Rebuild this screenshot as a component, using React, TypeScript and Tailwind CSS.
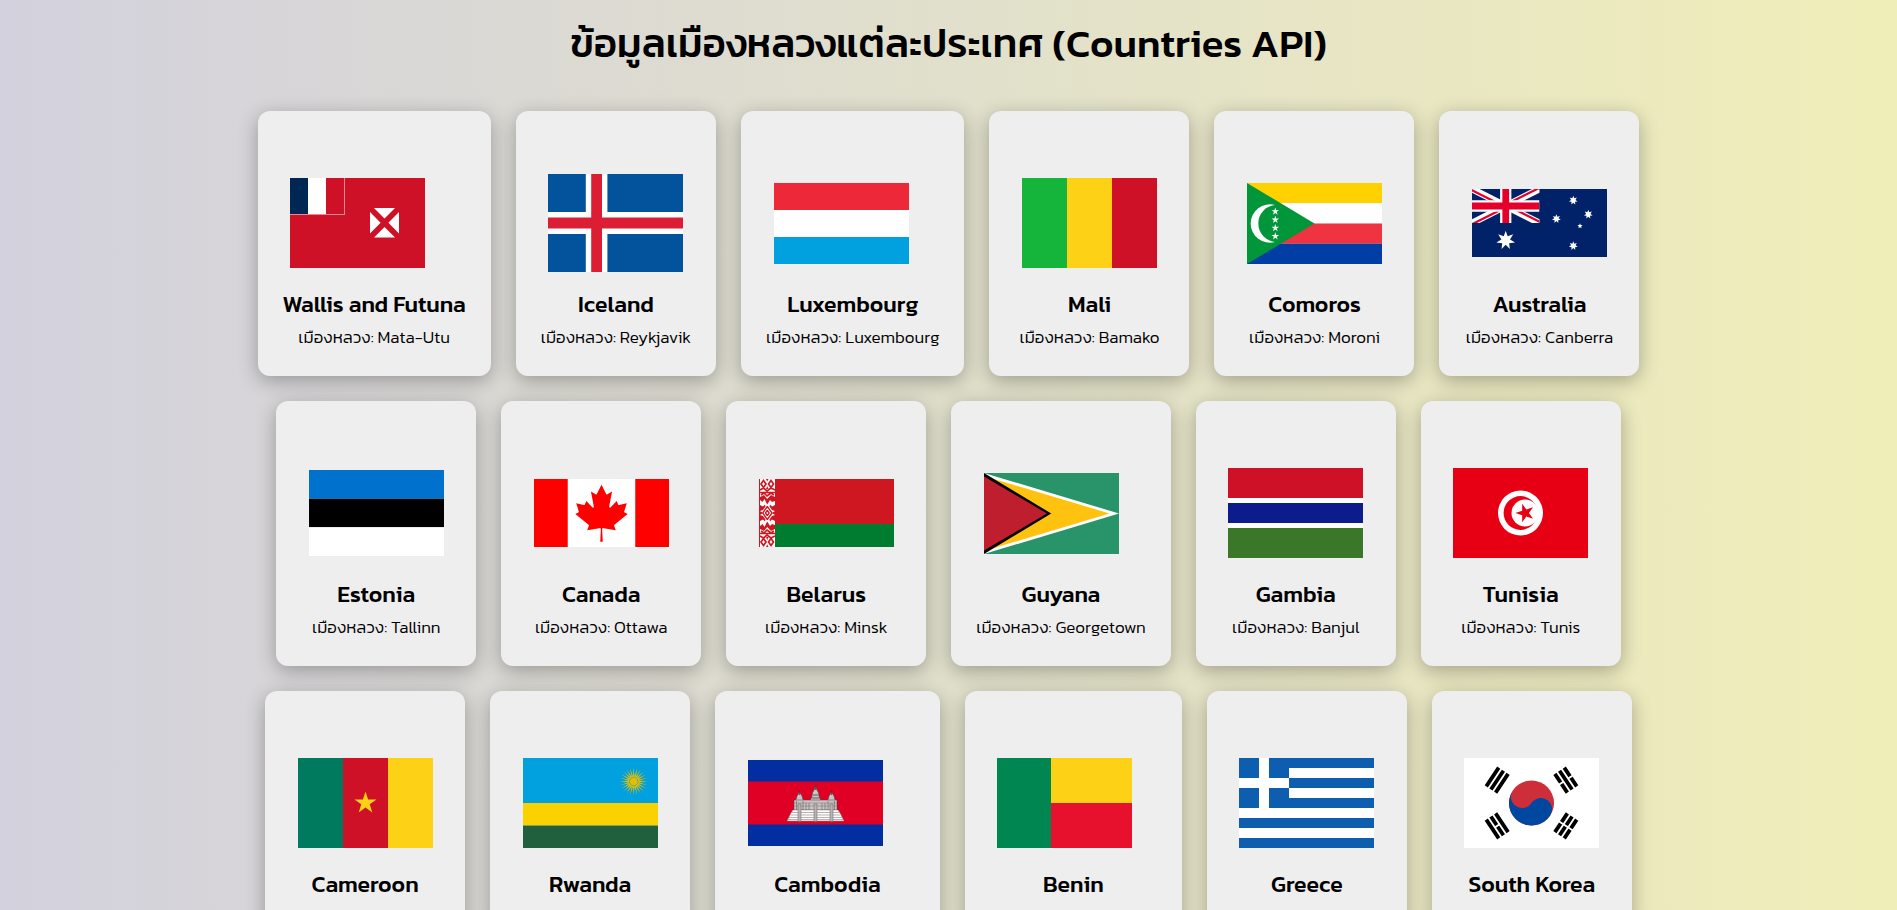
import type { ReactNode } from "react";

type Country = { name: string; capital: string; flag: ReactNode };

function starPoints(cx: number, cy: number, r: number, inner: number, n: number, turn = -90) {
  return Array.from({ length: n * 2 }, (_, i) => {
    const a = ((turn + (i * 180) / n) * Math.PI) / 180;
    const d = i % 2 === 0 ? r : inner;
    return `${(cx + d * Math.cos(a)).toFixed(2)},${(cy + d * Math.sin(a)).toFixed(2)}`;
  }).join(" ");
}

function Star({ x, y, r, n = 5, ratio = 0.382, turn = -90, fill = "#fff" }: {
  x: number; y: number; r: number; n?: number; ratio?: number; turn?: number; fill?: string;
}) {
  return <polygon points={starPoints(x, y, r, r * ratio, n, turn)} fill={fill} />;
}

function Flag({ box, height, children }: { box: string; height: number; children: ReactNode }) {
  return (
    <svg viewBox={box} width={135} height={height} preserveAspectRatio="none" className="block shrink-0 overflow-hidden" aria-hidden="true">
      {children}
    </svg>
  );
}

const wallis = (
  <Flag box="0 0 135 90" height={90}>
    <path fill="#ce1126" d="M0 0h135v90H0z" />
    <path fill="#fff" fillOpacity=".5" d="M54 0h1v37H0v-1h54z" />
    <path fill="#002654" d="M0 0h18v36H0z" />
    <path fill="#fff" d="M18 0h18v36H18z" />
    <path fill="#fff" d="M84 30h21L94.500 40.500zM84 59.600h21L94.500 49.100zM80 34v21.500L90.600 44.800zM109 34v21.500L98.400 44.800z" />
  </Flag>
);

const iceland = (
  <Flag box="0 0 25 18" height={98}>
    <path fill="#02529c" d="M0 0h25v18H0z" />
    <path fill="#fff" d="M0 7h7V0h4v7h14v4H11v7H7v-7H0z" />
    <path fill="#dc1e35" d="M0 8h8V0h2v8h15v2H10v8H8v-8H0z" />
  </Flag>
);

const luxembourg = (
  <Flag box="0 0 135 81" height={81}>
    <path fill="#ed2939" d="M0 0h135v27H0z" />
    <path fill="#fff" d="M0 27h135v27H0z" />
    <path fill="#00a1de" d="M0 54h135v27H0z" />
  </Flag>
);

const mali = (
  <Flag box="0 0 3 2" height={90}>
    <path fill="#14b53a" d="M0 0h1v2H0z" />
    <path fill="#fcd116" d="M1 0h1v2H1z" />
    <path fill="#ce1126" d="M2 0h1v2H2z" />
  </Flag>
);

const comoros = (
  <Flag box="0 0 135 81" height={81}>
    <path fill="#ffd100" d="M0 0h135v20.250H0z" />
    <path fill="#fff" d="M0 20.250h135v20.250H0z" />
    <path fill="#ef3340" d="M0 40.500h135v20.250H0z" />
    <path fill="#003da5" d="M0 60.750h135V81H0z" />
    <path fill="#009639" d="M0 0l67.500 40.500L0 81z" />
    <path fill="#fff" d="M28 22A19.200 19.200 0 1 0 28 59A18.600 18.600 0 0 1 28 22z" />
    {[28.4, 36.7, 45, 53.3].map((y) => <Star key={y} x={28.3} y={y} r={4} />)}
  </Flag>
);

const australia = (
  <Flag box="0 0 135 67.5" height={68}>
    <path fill="#012169" d="M0 0h135v68H0z" />
    <svg x="0" y="0" width="67.5" height="33.75" viewBox="0 0 60 30">
      <path stroke="#fff" strokeWidth="6" d="M0 0l60 30M60 0L0 30" />
      <path fill="#e4002b" d="M0 0l30 15h-4.500L0 2.200zM60 30L30 15h4.500L60 27.800zM60 0L34 13h-4.500L55.600 0zM0 30l26-13h4.500L4.400 30z" />
      <path stroke="#fff" strokeWidth="10" d="M30 0v30M0 15h60" />
      <path stroke="#e4002b" strokeWidth="6" d="M30 0v30M0 15h60" />
    </svg>
    <Star x={33.7} y={51} r={9.6} n={7} ratio={0.46} />
    <Star x={101.3} y={11.3} r={4.5} n={7} ratio={0.5} />
    <Star x={84.4} y={29.6} r={4.5} n={7} ratio={0.5} />
    <Star x={116.3} y={25.2} r={4.5} n={7} ratio={0.5} />
    <Star x={101.3} y={56.4} r={4.5} n={7} ratio={0.5} />
    <Star x={108} y={36.8} r={2.7} ratio={0.45} />
  </Flag>
);

const estonia = (
  <Flag box="0 0 3 3" height={86}>
    <path fill="#0072ce" d="M0 0h3v1H0z" />
    <path fill="#000" d="M0 1h3v1H0z" />
    <path fill="#fff" d="M0 2h3v1H0z" />
  </Flag>
);

const canada = (
  <Flag box="0 0 9600 4800" height={68}>
    <path fill="#f00" d="M0 0h9600v4800H0z" />
    <path fill="#fff" d="M2400 0h4800v4800H2400z" />
    <path fill="#f00" d="m4890 4430-45-863a95 95 0 0 1 111-98l859 151-116-320a65 65 0 0 1 20-73l941-762-212-99a65 65 0 0 1-34-79l186-572-542 115a65 65 0 0 1-73-38l-105-247-423 454a65 65 0 0 1-111-57l204-1052-327 189a65 65 0 0 1-91-27l-332-652-332 652a65 65 0 0 1-91 27l-327-189 204 1052a65 65 0 0 1-111 57l-423-454-105 247a65 65 0 0 1-73 38l-542-115 186 572a65 65 0 0 1-34 79l-212 99 941 762a65 65 0 0 1 20 73l-116 320 859-151a95 95 0 0 1 111 98l-45 863z" />
  </Flag>
);

const belarus = (
  <Flag box="0 0 135 68" height={68}>
    <path fill="#ce1720" d="M0 0h135v45H0z" />
    <path fill="#007c30" d="M16 45h119v23H16z" />
    <path fill="#fff" d="M0 0h16v68H0z" />
    <path fill="#ce1720" d="M0 0h1v68H0z" />
    {[false, true].map((flip) => (
      <g key={String(flip)} transform={flip ? "matrix(1 0 0 -1 0 68)" : undefined}>
        <path fill="none" stroke="#ce1720" strokeWidth="1.700" d="M4.500 1.500L7 5 4.500 8.500 2 5zM12 1.500L14.500 5 12 8.500 9.500 5zM1 11l3.500-2L8 12l4-3 4 2M1 13.500h15M2 16l3-2 3 3 4-3 3 2" />
        <path fill="#ce1720" d="M7 0h2.500L8.200 2.500zM7 10h2.500L8.200 7zM1 18l4-2 3.200 4 3.800-4 4 2v4l-3 1-2-2-2.800 4.500L5.500 20 3.500 23 1 21zM1 26l3 1.500 2-2 .5 2L4 31l-3 1zM16 26l-3 1.500-2-2-.5 2L13 31l3 1zM1 33l3 1-3 2zM16 33l-3 1 3 2z" />
        <path fill="none" stroke="#ce1720" strokeWidth="1.300" d="M8.300 27.500L13 34M8.300 27.500L3.700 34M8.300 31.500L10.300 34M8.300 31.500L6.300 34" />
      </g>
    ))}
  </Flag>
);

const guyana = (
  <Flag box="0 0 500 300" height={81}>
    <path fill="#29936a" d="M0 0h500v300H0z" />
    <path fill="#fff" d="M0 0l500 150L0 300z" />
    <path fill="#ffc20e" d="M0 11l465 139L0 289z" />
    <path fill="#000" d="M0 0l249 150L0 300z" />
    <path fill="#be1e2d" d="M0 13l233 137L0 287z" />
  </Flag>
);

const gambia = (
  <Flag box="0 0 3 18" height={90}>
    <path fill="#fff" d="M0 0h3v18H0z" />
    <path fill="#ce1126" d="M0 0h3v6H0z" />
    <path fill="#0c1c8c" d="M0 7h3v4H0z" />
    <path fill="#3a7728" d="M0 12h3v6H0z" />
  </Flag>
);

const tunisia = (
  <Flag box="0 0 135 90" height={90}>
    <path fill="#e70013" d="M0 0h135v90H0z" />
    <circle cx="67.5" cy="45" r="22.5" fill="#fff" />
    <circle cx="67.5" cy="45" r="16.9" fill="#e70013" />
    <circle cx="72" cy="45" r="13.5" fill="#fff" />
    <Star x={72.2} y={45} r={9.8} turn={180} fill="#e70013" />
  </Flag>
);

const cameroon = (
  <Flag box="0 0 135 90" height={90}>
    <path fill="#007a5e" d="M0 0h45v90H0z" />
    <path fill="#ce1126" d="M45 0h45v90H45z" />
    <path fill="#fcd116" d="M90 0h45v90H90z" />
    <Star x={67.5} y={45} r={11.6} fill="#fcd116" />
  </Flag>
);

const rwanda = (
  <Flag box="0 0 135 90" height={90}>
    <path fill="#00a1de" d="M0 0h135v45H0z" />
    <path fill="#fad201" d="M0 45h135v22.500H0z" />
    <path fill="#20603d" d="M0 67.500h135V90H0z" />
    <Star x={110.7} y={23.5} r={14} n={24} ratio={0.38} fill="#e5be01" />
    <circle cx="110.7" cy="23.500" r="4.300" fill="#e5be01" stroke="#00a1de" strokeWidth=".6" />
  </Flag>
);

const tower = "M0-9l1 3 1.500 2 .7 3 1.600 2 .2 3H-5l.2-3 1.600-2 .7-3L-1-6z";

const cambodia = (
  <Flag box="0 0 135 86" height={86}>
    <path fill="#032ea1" d="M0 0h135v86H0z" />
    <path fill="#e00025" d="M0 21.500h135v43H0z" />
    <g fill="#c9c5c5" stroke="#4a3c3e" strokeWidth=".5">
      <path d={tower} transform="translate(51.5 40)" />
      <path d={tower} transform="translate(83.5 40)" />
      <path d={tower} transform="matrix(1.2 0 0 1.600 67.500 39)" />
      <path d="M46 40h43v10H46z" />
    </g>
    <path fill="#fff" stroke="#8a7c7e" strokeWidth=".5" d="M45 50h45l2 3 1 2 1 2 1 2 1 2H39l1-2 1-2 1-2 1-2z" />
    <path fill="none" stroke="#8a7c7e" strokeWidth=".6" d="M44 52.500h47M43 55h49M41 57.500h53M40 59.500h55M46 43h43M46 46h43" />
    <path fill="none" stroke="#5c4f51" strokeWidth=".5" d="M48.500 41v9M55 41v9M58 43v7M61 43v7M74 43v7M77 43v7M80 41v9M86.500 41v9" />
    <path fill="#b9b4b4" stroke="#6b5e60" strokeWidth=".5" d="M50 44h3v17.500h-3zM66 44h3v17.500h-3zM82 44h3v17.500h-3z" />
    <path fill="none" stroke="#3a2d2f" strokeWidth=".7" d="M51.500 31v4M83.500 31v4M67.500 25v5M65 35h5M64 38h7" />
  </Flag>
);

const benin = (
  <Flag box="0 0 135 90" height={90}>
    <path fill="#008751" d="M0 0h54v90H0z" />
    <path fill="#fcd116" d="M54 0h81v45H54z" />
    <path fill="#e8112d" d="M54 45h81v45H54z" />
  </Flag>
);

const greece = (
  <Flag box="0 0 27 18" height={90}>
    <path fill="#0d5eaf" d="M0 0h27v18H0z" />
    <path fill="#fff" d="M10 2h17v2H10zM10 6h17v2H10zM0 10h27v2H0zM0 14h27v2H0zM4 0h2v10H4zM0 4h10v2H0z" />
  </Flag>
);

const bars = "M-6-25H6M-6-22H6M-6-19H6M-6 19H6M-6 22H6M-6 25H6";

const korea = (
  <Flag box="-36 -24 72 48" height={90}>
    <path fill="#fff" d="M-36-24h72v48h-72z" />
    <g transform="rotate(-56.31)">
      <path stroke="#000" strokeWidth="2" d={bars} />
      <circle r="12" fill="#cd2e3a" />
      <path fill="#0047a0" d="M0-12A6 6 0 0 0 0 0A6 6 0 0 1 0 12A12 12 0 0 1 0-12z" />
      <path stroke="#fff" d="M0 17v10" />
    </g>
    <g transform="rotate(-123.69)">
      <path stroke="#000" strokeWidth="2" d={bars} />
      <path stroke="#fff" d="M0-23.500v3M0 17v3.500M0 23.500v3" />
    </g>
  </Flag>
);

const countries: Country[] = [
  { name: "Wallis and Futuna", capital: "Mata-Utu", flag: wallis },
  { name: "Iceland", capital: "Reykjavik", flag: iceland },
  { name: "Luxembourg", capital: "Luxembourg", flag: luxembourg },
  { name: "Mali", capital: "Bamako", flag: mali },
  { name: "Comoros", capital: "Moroni", flag: comoros },
  { name: "Australia", capital: "Canberra", flag: australia },
  { name: "Estonia", capital: "Tallinn", flag: estonia },
  { name: "Canada", capital: "Ottawa", flag: canada },
  { name: "Belarus", capital: "Minsk", flag: belarus },
  { name: "Guyana", capital: "Georgetown", flag: guyana },
  { name: "Gambia", capital: "Banjul", flag: gambia },
  { name: "Tunisia", capital: "Tunis", flag: tunisia },
  { name: "Cameroon", capital: "Yaoundé", flag: cameroon },
  { name: "Rwanda", capital: "Kigali", flag: rwanda },
  { name: "Cambodia", capital: "Phnom Penh", flag: cambodia },
  { name: "Benin", capital: "Porto-Novo", flag: benin },
  { name: "Greece", capital: "Athens", flag: greece },
  { name: "South Korea", capital: "Seoul", flag: korea },
];

function CountryCard({ name, capital, flag }: Country) {
  return (
    <li className="min-w-[200px] rounded-xl bg-[#eeeeee] p-[25px] text-center shadow-[0_5px_20px_rgba(0,0,0,0.3)]">
      <div className="flex h-[150px] w-[150px] items-center justify-center pt-6">{flag}</div>
      <h2 className="text-[23px] leading-9 font-medium">{name}</h2>
      <p className="mt-0.5 text-[17px] leading-[27px] font-light">เมืองหลวง: {capital}</p>
    </li>
  );
}

export default function App() {
  return (
    <main className="min-h-screen bg-linear-to-r from-[#d3d1dd] to-[#f0eeb8] pt-[13px] pb-8 font-['Kanit','Noto_Sans_Thai','Noto_Sans',sans-serif] text-black">
      <h1 className="text-center text-[40px] leading-[60px] font-medium">ข้อมูลเมืองหลวงแต่ละประเทศ (Countries API)</h1>
      <ul className="mx-auto mt-[38px] flex w-4/5 flex-wrap justify-center gap-[25px]">
        {countries.map((c) => (
          <CountryCard key={c.name} {...c} />
        ))}
      </ul>
    </main>
  );
}
